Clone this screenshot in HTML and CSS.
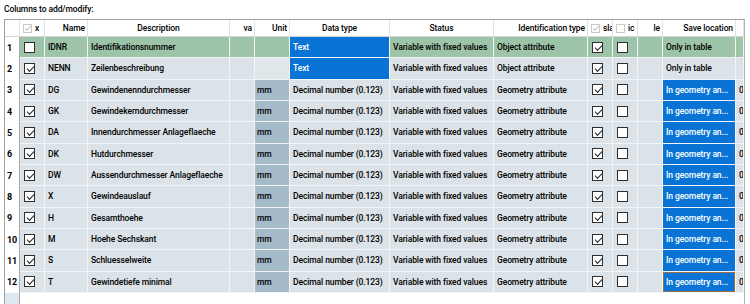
FILE: index.html
```html
<!DOCTYPE html>
<html>
<head>
<meta charset="utf-8">
<link rel="stylesheet" href="styles.css">
</head>
<body>
<div class="panel">
  <div class="caption">Columns to add/modify:</div>
  <div class="grid">
    <div class="hc"></div>
    <div class="hc h-x"><span class="cb cb-h on"></span><span>x</span></div>
    <div class="hc h-right">Name</div>
    <div class="hc h-center">Description</div>
    <div class="hc h-right">va</div>
    <div class="hc h-right">Unit</div>
    <div class="hc h-center">Data type</div>
    <div class="hc h-center">Status</div>
    <div class="hc h-right">Identification type</div>
    <div class="hc h-x"><span class="cb cb-h on"></span><span>sla</span></div>
    <div class="hc h-x"><span class="cb cb-h"></span><span>ic</span></div>
    <div class="hc h-right">le</div>
    <div class="hc h-right">Save location</div>
    <div class="hc"></div>

    <div class="rh">1</div>
    <div class="c g"><span class="cb"></span></div>
    <div class="c g">IDNR</div>
    <div class="c g">Identifikationsnummer</div>
    <div class="c g"></div>
    <div class="c g"></div>
    <div class="c sel">Text</div>
    <div class="c g">Variable with fixed values</div>
    <div class="c g">Object attribute</div>
    <div class="c g"><span class="cb on"></span></div>
    <div class="c g"><span class="cb"></span></div>
    <div class="c g"></div>
    <div class="c g">Only in table</div>
    <div class="c g"></div>

    <div class="rh">2</div>
    <div class="c"><span class="cb on"></span></div>
    <div class="c">NENN</div>
    <div class="c">Zeilenbeschreibung</div>
    <div class="c"></div>
    <div class="c u-light"></div>
    <div class="c sel">Text</div>
    <div class="c">Variable with fixed values</div>
    <div class="c">Object attribute</div>
    <div class="c"><span class="cb on"></span></div>
    <div class="c"><span class="cb"></span></div>
    <div class="c"></div>
    <div class="c">Only in table</div>
    <div class="c"></div>

    <div class="rh">3</div>
    <div class="c"><span class="cb on"></span></div>
    <div class="c">DG</div>
    <div class="c">Gewindenenndurchmesser</div>
    <div class="c"></div>
    <div class="c u">mm</div>
    <div class="c">Decimal number (0.123)</div>
    <div class="c">Variable with fixed values</div>
    <div class="c">Geometry attribute</div>
    <div class="c"><span class="cb on"></span></div>
    <div class="c"><span class="cb"></span></div>
    <div class="c"></div>
    <div class="c sel">In geometry an...</div>
    <div class="c">0</div>

    <div class="rh">4</div>
    <div class="c"><span class="cb on"></span></div>
    <div class="c">GK</div>
    <div class="c">Gewindekerndurchmesser</div>
    <div class="c"></div>
    <div class="c u">mm</div>
    <div class="c">Decimal number (0.123)</div>
    <div class="c">Variable with fixed values</div>
    <div class="c">Geometry attribute</div>
    <div class="c"><span class="cb on"></span></div>
    <div class="c"><span class="cb"></span></div>
    <div class="c"></div>
    <div class="c sel">In geometry an...</div>
    <div class="c">0</div>

    <div class="rh">5</div>
    <div class="c"><span class="cb on"></span></div>
    <div class="c">DA</div>
    <div class="c">Innendurchmesser Anlageflaeche</div>
    <div class="c"></div>
    <div class="c u">mm</div>
    <div class="c">Decimal number (0.123)</div>
    <div class="c">Variable with fixed values</div>
    <div class="c">Geometry attribute</div>
    <div class="c"><span class="cb on"></span></div>
    <div class="c"><span class="cb"></span></div>
    <div class="c"></div>
    <div class="c sel">In geometry an...</div>
    <div class="c">0</div>

    <div class="rh">6</div>
    <div class="c"><span class="cb on"></span></div>
    <div class="c">DK</div>
    <div class="c">Hutdurchmesser</div>
    <div class="c"></div>
    <div class="c u">mm</div>
    <div class="c">Decimal number (0.123)</div>
    <div class="c">Variable with fixed values</div>
    <div class="c">Geometry attribute</div>
    <div class="c"><span class="cb on"></span></div>
    <div class="c"><span class="cb"></span></div>
    <div class="c"></div>
    <div class="c sel">In geometry an...</div>
    <div class="c">0</div>

    <div class="rh">7</div>
    <div class="c"><span class="cb on"></span></div>
    <div class="c">DW</div>
    <div class="c">Aussendurchmesser Anlageflaeche</div>
    <div class="c"></div>
    <div class="c u">mm</div>
    <div class="c">Decimal number (0.123)</div>
    <div class="c">Variable with fixed values</div>
    <div class="c">Geometry attribute</div>
    <div class="c"><span class="cb on"></span></div>
    <div class="c"><span class="cb"></span></div>
    <div class="c"></div>
    <div class="c sel">In geometry an...</div>
    <div class="c">0</div>

    <div class="rh">8</div>
    <div class="c"><span class="cb on"></span></div>
    <div class="c">X</div>
    <div class="c">Gewindeauslauf</div>
    <div class="c"></div>
    <div class="c u">mm</div>
    <div class="c">Decimal number (0.123)</div>
    <div class="c">Variable with fixed values</div>
    <div class="c">Geometry attribute</div>
    <div class="c"><span class="cb on"></span></div>
    <div class="c"><span class="cb"></span></div>
    <div class="c"></div>
    <div class="c sel">In geometry an...</div>
    <div class="c">0</div>

    <div class="rh">9</div>
    <div class="c"><span class="cb on"></span></div>
    <div class="c">H</div>
    <div class="c">Gesamthoehe</div>
    <div class="c"></div>
    <div class="c u">mm</div>
    <div class="c">Decimal number (0.123)</div>
    <div class="c">Variable with fixed values</div>
    <div class="c">Geometry attribute</div>
    <div class="c"><span class="cb on"></span></div>
    <div class="c"><span class="cb"></span></div>
    <div class="c"></div>
    <div class="c sel">In geometry an...</div>
    <div class="c">0</div>

    <div class="rh">10</div>
    <div class="c"><span class="cb on"></span></div>
    <div class="c">M</div>
    <div class="c">Hoehe Sechskant</div>
    <div class="c"></div>
    <div class="c u">mm</div>
    <div class="c">Decimal number (0.123)</div>
    <div class="c">Variable with fixed values</div>
    <div class="c">Geometry attribute</div>
    <div class="c"><span class="cb on"></span></div>
    <div class="c"><span class="cb"></span></div>
    <div class="c"></div>
    <div class="c sel">In geometry an...</div>
    <div class="c">0</div>

    <div class="rh">11</div>
    <div class="c"><span class="cb on"></span></div>
    <div class="c">S</div>
    <div class="c">Schluesselweite</div>
    <div class="c"></div>
    <div class="c u">mm</div>
    <div class="c">Decimal number (0.123)</div>
    <div class="c">Variable with fixed values</div>
    <div class="c">Geometry attribute</div>
    <div class="c"><span class="cb on"></span></div>
    <div class="c"><span class="cb"></span></div>
    <div class="c"></div>
    <div class="c sel">In geometry an...</div>
    <div class="c">0</div>

    <div class="rh">12</div>
    <div class="c"><span class="cb on"></span></div>
    <div class="c">T</div>
    <div class="c">Gewindetiefe minimal</div>
    <div class="c"></div>
    <div class="c u">mm</div>
    <div class="c">Decimal number (0.123)</div>
    <div class="c">Variable with fixed values</div>
    <div class="c">Geometry attribute</div>
    <div class="c"><span class="cb on"></span></div>
    <div class="c"><span class="cb"></span></div>
    <div class="c"></div>
    <div class="c sel focus">In geometry an...</div>
    <div class="c">0</div>

    <div class="rh newrow"></div>
  </div>
</div>
</body>
</html>
```

FILE: styles.css
```css
* { box-sizing: border-box; }
html, body { margin: 0; padding: 0; background: #fff; }
body {
  font-family: Roboto, "Liberation Sans", sans-serif;
  font-size: 8.5px;
  font-weight: 500;
  letter-spacing: -0.1px;
  color: #000;
}
.panel {
  width: 750px;
  height: 304px;
  overflow: hidden;
  padding: 0 0 0 4px;
}
.caption {
  height: 19px;
  line-height: 17px;
  padding-top: 1px;
  white-space: nowrap;
}
.grid {
  display: grid;
  grid-template-columns: 15px 25px 43px 142px 25px 35px 100px 104px 94px 25px 25px 25px 73px 8px;
  grid-template-rows: 17px repeat(12, 21.333px) 1fr;
  width: 741px;
  height: 290px;
  border-top: 1px solid #a0a0a0;
  border-left: 1px solid #a0a0a0;
  border-right: 1px solid #b4b4b4;
  overflow: hidden;
}
.hc {
  background: #fff;
  border-right: 1px solid #e4e4e4;
  border-bottom: 1px solid #d6d6d6;
  display: flex;
  align-items: center;
  white-space: nowrap;
  overflow: hidden;
  padding: 0 2px;
}
.h-right { justify-content: flex-end; }
.h-center { justify-content: center; }
.h-x { gap: 3px; padding-left: 4px; }
.rh {
  background: #fff;
  border-right: 1px solid #a8a8a8;
  font-weight: 700;
  font-size: 9px;
  display: flex;
  align-items: center;
  padding-left: 2px;
  white-space: nowrap;
  overflow: hidden;
}
.rh.newrow { background: #dfe7ee; }
.c {
  background: #dbe3e8;
  border-right: 1px solid #f2f5f7;
  border-bottom: 1px solid #f2f5f7;
  display: flex;
  align-items: center;
  padding-left: 3px;
  white-space: nowrap;
  overflow: hidden;
}
.c.g { background: #9dc3a8; }
.c.u { background: #a5bbca; padding-left: 2px; }
.c.u-light { background: #e0e7eb; }
.c.sel { background: #0a74d6; color: #fff; }
.c.focus { box-shadow: inset 0 0 0 1px #9b6f45; }
.cb {
  display: inline-block;
  width: 11px;
  height: 11px;
  border: 1px solid #2e2e2e;
  background: #fff;
  margin-left: 1px;
  position: relative;
  flex: none;
}
.cb.on::after {
  content: "";
  position: absolute;
  left: 2px;
  top: 0px;
  width: 6px;
  height: 3px;
  border-left: 1px solid #222;
  border-bottom: 1px solid #222;
  transform: translate(0, 2px) rotate(-45deg);
}
.cb-h { width: 9px; height: 9px; border-color: #c9c9c9; margin-left: 0; }
.cb-h.on::after { border-color: #c9c9c9; left: 1px; width: 5px; height: 2px; top: -1px; }
.h-x { gap: 3px; padding-left: 3px; }
```
